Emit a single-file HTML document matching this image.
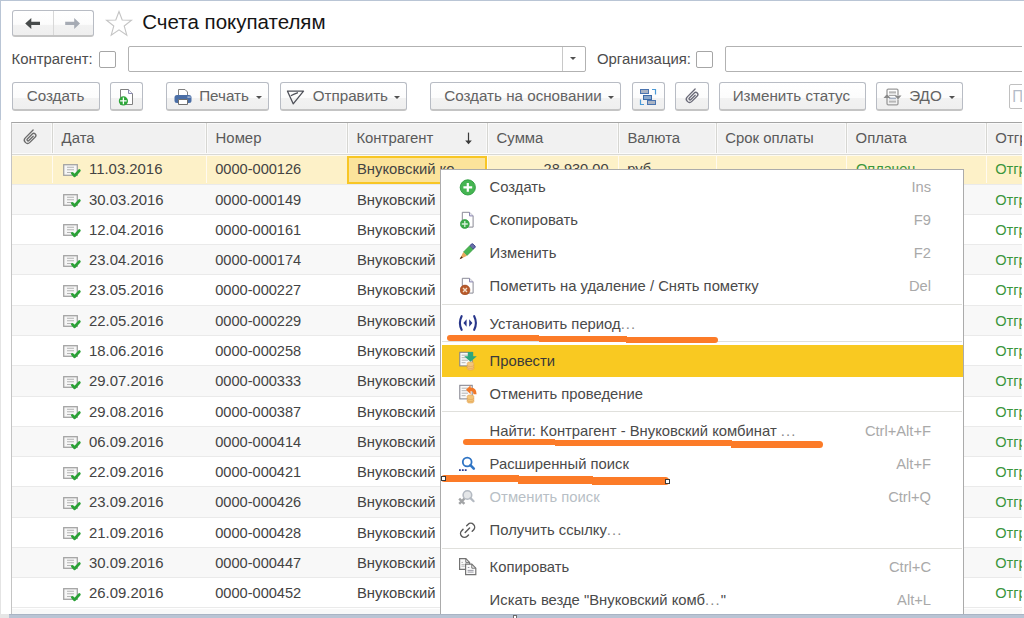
<!DOCTYPE html>
<html><head><meta charset="utf-8">
<style>
*{box-sizing:border-box}
html,body{margin:0;padding:0}
body{width:1024px;height:618px;overflow:hidden;position:relative;background:#fff;font-family:"Liberation Sans",sans-serif;color:#404040}
.a{position:absolute}
.t{position:absolute;white-space:nowrap;line-height:20px;height:20px}
.btn{position:absolute;top:82px;height:29px;border:1px solid #b8bcc4;border-bottom:2px solid #c4c4c4;border-radius:3px;background:linear-gradient(#ffffff 0%,#fcfcfc 56%,#f2f2f2 58%,#efefef 100%)}
.bt{position:absolute;top:5.4px;margin-left:-0.8px;font-size:15.2px;line-height:16px;color:#636363;white-space:nowrap;}
.dd{position:absolute;width:0;height:0;border-left:3.5px solid transparent;border-right:3.5px solid transparent;border-top:3.5px solid #505050}
.hd{position:absolute;top:122.5px;height:31px;font-size:14.9px;line-height:31px;color:#5a5a5a;padding-left:9px;white-space:nowrap;}
.hdv{position:absolute;top:123px;width:1px;height:31px;background:#d6d6d2;box-shadow:-1px 0 0 #fafafa,1px 0 0 #fafafa}
.row{position:absolute;left:12px;width:1010px;height:30.28px;border-bottom:1px solid #eaeaea}
.cell{position:absolute;font-size:14.6px;line-height:30px;height:30px;white-space:nowrap;color:#434343;top:0;}
.g{color:#3a963c}
.mi{position:absolute;left:441px;width:522px;height:33px}
.mt{position:absolute;left:48.6px;top:0.8px;line-height:33px;font-size:14.8px;color:#4a4a4a;white-space:nowrap;}
.ms{position:absolute;right:32px;top:0.8px;line-height:33px;font-size:14.7px;color:#a9a9a9;white-space:nowrap;}
.sep{position:absolute;left:442px;width:520px;height:1px;background:#e0e0dc}
.orl{position:absolute;background:#fc7b28}
</style></head><body>
<!-- frame -->
<div class="a" style="left:0;top:0;width:1024px;height:1px;background:#b9c5d5"></div>
<div class="a" style="left:0;top:0;width:1px;height:120px;background:#b9c5d5"></div>
<div class="a" style="left:0;top:120px;width:1px;height:498px;background:#e4e4e4"></div>

<!-- nav buttons -->
<div class="btn" style="left:11.5px;top:10px;width:82px;height:27px"></div>
<div class="a" style="left:52.5px;top:11px;width:1px;height:24px;background:#d8d8d8"></div>
<svg class="a" style="left:24px;top:17px" width="18" height="13" viewBox="0 0 18 13"><path d="M1.2 6.5 L7.3 1.1 L7.3 4.7 L16 4.7 L16 7.9 L7.3 7.9 L7.3 12.1 Z" fill="#464a4a"/></svg>
<svg class="a" style="left:64px;top:17px" width="18" height="13" viewBox="0 0 18 13"><path d="M16 6.5 L10.2 1.1 L10.2 4.7 L1.2 4.7 L1.2 7.9 L10.2 7.9 L10.2 12.1 Z" fill="#a6abb4"/></svg>
<!-- star -->
<svg class="a" style="left:105px;top:10px" width="28" height="27" viewBox="0 0 28 27"><path d="M14 1.5 L17.2 10 L26.5 10.3 L19.2 16 L21.8 25.2 L14 19.8 L6.2 25.2 L8.8 16 L1.5 10.3 L10.8 10 Z" fill="none" stroke="#c4c4c4" stroke-width="1.1"/></svg>
<div class="t" style="left:142.3px;top:10.3px;font-size:20.5px;line-height:24px;height:24px;color:#151515">Счета покупателям</div>

<!-- filter row -->
<div class="t" style="left:11.5px;top:48.5px;font-size:14.9px;color:#4d4d4d;">Контрагент:</div>
<div class="a" style="left:99px;top:51px;width:17px;height:17px;border:1px solid #a6a6a6;border-radius:2px;background:#fff"></div>
<div class="a" style="left:128px;top:46px;width:458px;height:26px;border:1px solid #b2b2b2;border-radius:2px;background:#fff"></div>
<div class="a" style="left:561.5px;top:47px;width:1px;height:24px;background:#c8c8c8"></div>
<div class="dd" style="left:569.5px;top:57px"></div>
<div class="t" style="left:597px;top:48.5px;font-size:14.9px;color:#4d4d4d;">Организация:</div>
<div class="a" style="left:696px;top:51px;width:17px;height:17px;border:1px solid #a6a6a6;border-radius:2px;background:#fff"></div>
<div class="a" style="left:725px;top:46px;width:310px;height:26px;border:1px solid #b2b2b2;border-radius:2px;background:#fff"></div>

<!-- toolbar -->
<div class="btn" style="left:11.5px;width:88px"><div class="bt" style="left:15px">Создать</div></div>
<div class="btn" style="left:110px;width:33px"></div>
<div class="btn" style="left:166px;width:103px"><div class="bt" style="left:33px">Печать</div><div class="dd" style="left:89px;top:13px"></div></div>
<div class="btn" style="left:279.5px;width:127px"><div class="bt" style="left:33px">Отправить</div><div class="dd" style="left:113px;top:13px"></div></div>
<div class="btn" style="left:430px;width:191px"><div class="bt" style="left:14px">Создать на основании</div><div class="dd" style="left:177px;top:13px"></div></div>
<div class="btn" style="left:631.5px;width:33.5px"></div>
<div class="btn" style="left:675px;width:34px"></div>
<div class="btn" style="left:718.5px;width:147.5px"><div class="bt" style="left:14px">Изменить статус</div></div>
<div class="btn" style="left:876px;width:86.5px"><div class="bt" style="left:33px">ЭДО</div><div class="dd" style="left:72px;top:13px"></div></div>
<div class="a" style="left:1009px;top:84px;width:30px;height:25px;border:1px solid #c0c0c0;border-radius:2px;background:#fff"></div>
<div class="t" style="left:1012.3px;top:86.5px;font-size:15px;color:#b4bcc8;transform:scaleY(1.15);transform-origin:0 15px">П</div>


<!-- toolbar icons -->
<svg class="a" style="left:118px;top:88px" width="18" height="18" viewBox="0 0 18 18"><path d="M2.5 1.5h8l4 4v11h-12z" fill="#fff" stroke="#808080"/><path d="M10.5 1.5v4h4" fill="#eef" stroke="#8a8ab0"/><circle cx="5.4" cy="12.9" r="4.6" fill="#2ea63a"/><path d="M5.4 9.6v6.6M2.1 12.9h6.6" stroke="#fff" stroke-width="1.3"/></svg>
<svg class="a" style="left:174px;top:88px" width="18" height="18" viewBox="0 0 18 18"><path d="M4.5 1.5h6.5l2.5 2.5v4h-9z" fill="#fff" stroke="#808080"/><rect x="0.5" y="7" width="17" height="8" rx="2.5" fill="#4a6ea6"/><rect x="13.5" y="8.5" width="1.3" height="1.2" fill="#dfe8f5"/><rect x="15.3" y="8.5" width="1.2" height="1.2" fill="#dfe8f5"/><path d="M4.5 11.5h9v5h-9z" fill="#fff" stroke="#707070"/></svg>
<svg class="a" style="left:286px;top:90px" width="19" height="15" viewBox="0 0 19 15"><path d="M1.5 1.2 L17.5 1.2 L7.2 13.8 Z" fill="none" stroke="#4e5058" stroke-width="1.3" stroke-linejoin="round"/><path d="M4.8 5.7 Q8 4 12 2.6" fill="none" stroke="#4e5058" stroke-width="1.2"/></svg>
<svg class="a" style="left:639px;top:88px" width="18" height="18" viewBox="0 0 18 18"><path d="M13 1.5h3.5v5M1.5 11.5v5h3.5" fill="none" stroke="#4a9ad8" stroke-width="1.2"/><rect x="1.5" y="1.5" width="8" height="4" fill="#aab4c4" stroke="#4a74b0"/><rect x="4.5" y="7.5" width="8" height="4" fill="#8aa8cc" stroke="#3a6aa8"/><rect x="8.5" y="12.5" width="8" height="4" fill="#aab4c4" stroke="#4a74b0"/></svg>
<svg class="a" style="left:682.5px;top:87.5px" width="18" height="18" viewBox="0 0 18 18"><g transform="rotate(45 9 9)"><path d="M5.6 1.2 V12.2 A3.2 3.2 0 0 0 12 12.2 V4.6 A2.1 2.1 0 0 0 7.8 4.6 V11.6 A1.1 1.1 0 0 0 10 11.6 V5.5" fill="none" stroke="#6a6a78" stroke-width="1.35" stroke-linecap="round"/></g></svg>
<svg class="a" style="left:883px;top:88px" width="20" height="18" viewBox="0 0 20 18"><path d="M4 6.5 V2.5 a1.3 1.3 0 0 1 1.3 -1.3 h8.4 a1.3 1.3 0 0 1 1.3 1.3 V7" fill="none" stroke="#9a9a9a" stroke-width="1.3"/><path d="M4 10 V15.5 a1.3 1.3 0 0 0 1.3 1.3 h8.4 a1.3 1.3 0 0 0 1.3 -1.3 V11.5" fill="none" stroke="#9a9a9a" stroke-width="1.3"/><rect x="6" y="3.3" width="7" height="2.2" fill="#b8b8b8"/><rect x="6" y="6.8" width="7" height="1.2" fill="#a8a8a8"/><rect x="6" y="9.6" width="7" height="1.6" fill="#a6b0c0"/><rect x="6" y="12.6" width="7" height="2" fill="#b8b8b8"/><path d="M0.5 10 L4 6 L7.5 10Z" fill="#8a8a8a"/><path d="M11.5 7.5 L15 11.5 L18.5 7.5Z" fill="#8a8a8a"/></svg>

<!-- table -->
<div class="a" style="left:11px;top:122px;width:1011px;height:492px;border-left:1.5px solid #c4c4c4;border-top:1px solid #a4a4a4;background:#fff"></div>
<div class="a" style="left:12px;top:123px;width:1010px;height:31px;background:#f1f1f1;border-top:1px solid #fafafa"></div>

<div class="hdv" style="left:52.1px"></div>
<div class="hdv" style="left:206.1px"></div>
<div class="hdv" style="left:346.9px"></div>
<div class="hdv" style="left:487.1px"></div>
<div class="hdv" style="left:617.9px"></div>
<div class="hdv" style="left:715.7px"></div>
<div class="hdv" style="left:846.1px"></div>
<div class="hdv" style="left:985.8px"></div>
<div class="hd" style="left:52.6px">Дата</div>
<div class="hd" style="left:206.6px">Номер</div>
<div class="hd" style="left:347.4px">Контрагент</div>
<div class="hd" style="left:487.6px">Сумма</div>
<div class="hd" style="left:618.4px">Валюта</div>
<div class="hd" style="left:716.2px">Срок оплаты</div>
<div class="hd" style="left:846.6px">Оплата</div>
<div class="hd" style="left:986.3px">Отгрузка</div>
<svg class="a" style="left:21px;top:129px" width="18" height="18" viewBox="0 0 18 18"><g transform="rotate(45 9 9)"><path d="M5.6 1.2 V12.2 A3.2 3.2 0 0 0 12 12.2 V4.6 A2.1 2.1 0 0 0 7.8 4.6 V11.6 A1.1 1.1 0 0 0 10 11.6 V5.5" fill="none" stroke="#6b6b6b" stroke-width="1.35" stroke-linecap="round"/></g></svg>
<svg class="a" style="left:464px;top:132px" width="9" height="14" viewBox="0 0 9 14"><path d="M4.5 0.6V9.5" stroke="#3a3a3a" stroke-width="1.2"/><path d="M1.2 8.6 L7.8 8.6 L4.5 12.2 Z" fill="#3a3a3a"/></svg>
<div class="row" style="top:154.30px;background:#fdf1c8"><div class="a" style="left:40.1px;top:0;width:1px;height:29px;background:#fffaf0"></div><div class="a" style="left:194.1px;top:0;width:1px;height:29px;background:#fffaf0"></div><div class="a" style="left:334.9px;top:0;width:1px;height:29px;background:#fffaf0"></div><div class="a" style="left:475.1px;top:0;width:1px;height:29px;background:#fffaf0"></div><div class="a" style="left:605.9px;top:0;width:1px;height:29px;background:#fffaf0"></div><div class="a" style="left:703.7px;top:0;width:1px;height:29px;background:#fffaf0"></div><div class="a" style="left:834.1px;top:0;width:1px;height:29px;background:#fffaf0"></div><div class="a" style="left:973.8px;top:0;width:1px;height:29px;background:#fffaf0"></div><div class="a" style="left:335.4px;top:1.5px;width:140px;height:28px;border:2px solid #f8c624;background:#fbe39b"></div><svg class="a" style="left:51px;top:9.5px" width="19" height="15" viewBox="0 0 19 15"><rect x="0.7" y="0.7" width="13.6" height="10.6" fill="#f6f6f6" stroke="#a4a4a4" stroke-width="1.3"/><path d="M4 3.2h7M4 5.7h7M4 8.5h5" stroke="#b4b4b4" stroke-width="1.1"/><path d="M9.4 9.4 L11.6 11.8 L16.3 6.6" fill="none" stroke="#2aa136" stroke-width="2.8" stroke-linecap="round" stroke-linejoin="round"/></svg><div class="cell" style="left:77px;font-size:14.9px">11.03.2016</div><div class="cell" style="left:203.2px">0000-000126</div><div class="cell" style="left:345px;font-size:14.8px">Внуковский ко</div><div class="cell" style="left:531.6px">28 930,00</div><div class="cell" style="left:615.3px">руб.</div><div class="cell g" style="left:844px">Оплачен</div><div class="cell g" style="left:983.2px">Отгружен</div></div>
<div class="row" style="top:184.58px;background:#f8f8f8"><svg class="a" style="left:51px;top:9.5px" width="19" height="15" viewBox="0 0 19 15"><rect x="0.7" y="0.7" width="13.6" height="10.6" fill="#f6f6f6" stroke="#a4a4a4" stroke-width="1.3"/><path d="M4 3.2h7M4 5.7h7M4 8.5h5" stroke="#b4b4b4" stroke-width="1.1"/><path d="M9.4 9.4 L11.6 11.8 L16.3 6.6" fill="none" stroke="#2aa136" stroke-width="2.8" stroke-linecap="round" stroke-linejoin="round"/></svg><div class="cell" style="left:77px;font-size:14.9px">30.03.2016</div><div class="cell" style="left:203.2px">0000-000149</div><div class="cell" style="left:345px;font-size:14.8px">Внуковский</div><div class="cell" style="left:531.6px">28 930,00</div><div class="cell" style="left:615.3px">руб.</div><div class="cell g" style="left:844px">Оплачен</div><div class="cell g" style="left:983.2px">Отгружен</div></div>
<div class="row" style="top:214.86px;background:#ffffff"><svg class="a" style="left:51px;top:9.5px" width="19" height="15" viewBox="0 0 19 15"><rect x="0.7" y="0.7" width="13.6" height="10.6" fill="#f6f6f6" stroke="#a4a4a4" stroke-width="1.3"/><path d="M4 3.2h7M4 5.7h7M4 8.5h5" stroke="#b4b4b4" stroke-width="1.1"/><path d="M9.4 9.4 L11.6 11.8 L16.3 6.6" fill="none" stroke="#2aa136" stroke-width="2.8" stroke-linecap="round" stroke-linejoin="round"/></svg><div class="cell" style="left:77px;font-size:14.9px">12.04.2016</div><div class="cell" style="left:203.2px">0000-000161</div><div class="cell" style="left:345px;font-size:14.8px">Внуковский</div><div class="cell" style="left:531.6px">28 930,00</div><div class="cell" style="left:615.3px">руб.</div><div class="cell g" style="left:844px">Оплачен</div><div class="cell g" style="left:983.2px">Отгружен</div></div>
<div class="row" style="top:245.14px;background:#f8f8f8"><svg class="a" style="left:51px;top:9.5px" width="19" height="15" viewBox="0 0 19 15"><rect x="0.7" y="0.7" width="13.6" height="10.6" fill="#f6f6f6" stroke="#a4a4a4" stroke-width="1.3"/><path d="M4 3.2h7M4 5.7h7M4 8.5h5" stroke="#b4b4b4" stroke-width="1.1"/><path d="M9.4 9.4 L11.6 11.8 L16.3 6.6" fill="none" stroke="#2aa136" stroke-width="2.8" stroke-linecap="round" stroke-linejoin="round"/></svg><div class="cell" style="left:77px;font-size:14.9px">23.04.2016</div><div class="cell" style="left:203.2px">0000-000174</div><div class="cell" style="left:345px;font-size:14.8px">Внуковский</div><div class="cell" style="left:531.6px">28 930,00</div><div class="cell" style="left:615.3px">руб.</div><div class="cell g" style="left:844px">Оплачен</div><div class="cell g" style="left:983.2px">Отгружен</div></div>
<div class="row" style="top:275.42px;background:#ffffff"><svg class="a" style="left:51px;top:9.5px" width="19" height="15" viewBox="0 0 19 15"><rect x="0.7" y="0.7" width="13.6" height="10.6" fill="#f6f6f6" stroke="#a4a4a4" stroke-width="1.3"/><path d="M4 3.2h7M4 5.7h7M4 8.5h5" stroke="#b4b4b4" stroke-width="1.1"/><path d="M9.4 9.4 L11.6 11.8 L16.3 6.6" fill="none" stroke="#2aa136" stroke-width="2.8" stroke-linecap="round" stroke-linejoin="round"/></svg><div class="cell" style="left:77px;font-size:14.9px">23.05.2016</div><div class="cell" style="left:203.2px">0000-000227</div><div class="cell" style="left:345px;font-size:14.8px">Внуковский</div><div class="cell" style="left:531.6px">28 930,00</div><div class="cell" style="left:615.3px">руб.</div><div class="cell g" style="left:844px">Оплачен</div><div class="cell g" style="left:983.2px">Отгружен</div></div>
<div class="row" style="top:305.70px;background:#f8f8f8"><svg class="a" style="left:51px;top:9.5px" width="19" height="15" viewBox="0 0 19 15"><rect x="0.7" y="0.7" width="13.6" height="10.6" fill="#f6f6f6" stroke="#a4a4a4" stroke-width="1.3"/><path d="M4 3.2h7M4 5.7h7M4 8.5h5" stroke="#b4b4b4" stroke-width="1.1"/><path d="M9.4 9.4 L11.6 11.8 L16.3 6.6" fill="none" stroke="#2aa136" stroke-width="2.8" stroke-linecap="round" stroke-linejoin="round"/></svg><div class="cell" style="left:77px;font-size:14.9px">22.05.2016</div><div class="cell" style="left:203.2px">0000-000229</div><div class="cell" style="left:345px;font-size:14.8px">Внуковский</div><div class="cell" style="left:531.6px">28 930,00</div><div class="cell" style="left:615.3px">руб.</div><div class="cell g" style="left:844px">Оплачен</div><div class="cell g" style="left:983.2px">Отгружен</div></div>
<div class="row" style="top:335.98px;background:#ffffff"><svg class="a" style="left:51px;top:9.5px" width="19" height="15" viewBox="0 0 19 15"><rect x="0.7" y="0.7" width="13.6" height="10.6" fill="#f6f6f6" stroke="#a4a4a4" stroke-width="1.3"/><path d="M4 3.2h7M4 5.7h7M4 8.5h5" stroke="#b4b4b4" stroke-width="1.1"/><path d="M9.4 9.4 L11.6 11.8 L16.3 6.6" fill="none" stroke="#2aa136" stroke-width="2.8" stroke-linecap="round" stroke-linejoin="round"/></svg><div class="cell" style="left:77px;font-size:14.9px">18.06.2016</div><div class="cell" style="left:203.2px">0000-000258</div><div class="cell" style="left:345px;font-size:14.8px">Внуковский</div><div class="cell" style="left:531.6px">28 930,00</div><div class="cell" style="left:615.3px">руб.</div><div class="cell g" style="left:844px">Оплачен</div><div class="cell g" style="left:983.2px">Отгружен</div></div>
<div class="row" style="top:366.26px;background:#f8f8f8"><svg class="a" style="left:51px;top:9.5px" width="19" height="15" viewBox="0 0 19 15"><rect x="0.7" y="0.7" width="13.6" height="10.6" fill="#f6f6f6" stroke="#a4a4a4" stroke-width="1.3"/><path d="M4 3.2h7M4 5.7h7M4 8.5h5" stroke="#b4b4b4" stroke-width="1.1"/><path d="M9.4 9.4 L11.6 11.8 L16.3 6.6" fill="none" stroke="#2aa136" stroke-width="2.8" stroke-linecap="round" stroke-linejoin="round"/></svg><div class="cell" style="left:77px;font-size:14.9px">29.07.2016</div><div class="cell" style="left:203.2px">0000-000333</div><div class="cell" style="left:345px;font-size:14.8px">Внуковский</div><div class="cell" style="left:531.6px">28 930,00</div><div class="cell" style="left:615.3px">руб.</div><div class="cell g" style="left:844px">Оплачен</div><div class="cell g" style="left:983.2px">Отгружен</div></div>
<div class="row" style="top:396.54px;background:#ffffff"><svg class="a" style="left:51px;top:9.5px" width="19" height="15" viewBox="0 0 19 15"><rect x="0.7" y="0.7" width="13.6" height="10.6" fill="#f6f6f6" stroke="#a4a4a4" stroke-width="1.3"/><path d="M4 3.2h7M4 5.7h7M4 8.5h5" stroke="#b4b4b4" stroke-width="1.1"/><path d="M9.4 9.4 L11.6 11.8 L16.3 6.6" fill="none" stroke="#2aa136" stroke-width="2.8" stroke-linecap="round" stroke-linejoin="round"/></svg><div class="cell" style="left:77px;font-size:14.9px">29.08.2016</div><div class="cell" style="left:203.2px">0000-000387</div><div class="cell" style="left:345px;font-size:14.8px">Внуковский</div><div class="cell" style="left:531.6px">28 930,00</div><div class="cell" style="left:615.3px">руб.</div><div class="cell g" style="left:844px">Оплачен</div><div class="cell g" style="left:983.2px">Отгружен</div></div>
<div class="row" style="top:426.82px;background:#f8f8f8"><svg class="a" style="left:51px;top:9.5px" width="19" height="15" viewBox="0 0 19 15"><rect x="0.7" y="0.7" width="13.6" height="10.6" fill="#f6f6f6" stroke="#a4a4a4" stroke-width="1.3"/><path d="M4 3.2h7M4 5.7h7M4 8.5h5" stroke="#b4b4b4" stroke-width="1.1"/><path d="M9.4 9.4 L11.6 11.8 L16.3 6.6" fill="none" stroke="#2aa136" stroke-width="2.8" stroke-linecap="round" stroke-linejoin="round"/></svg><div class="cell" style="left:77px;font-size:14.9px">06.09.2016</div><div class="cell" style="left:203.2px">0000-000414</div><div class="cell" style="left:345px;font-size:14.8px">Внуковский</div><div class="cell" style="left:531.6px">28 930,00</div><div class="cell" style="left:615.3px">руб.</div><div class="cell g" style="left:844px">Оплачен</div><div class="cell g" style="left:983.2px">Отгружен</div></div>
<div class="row" style="top:457.10px;background:#ffffff"><svg class="a" style="left:51px;top:9.5px" width="19" height="15" viewBox="0 0 19 15"><rect x="0.7" y="0.7" width="13.6" height="10.6" fill="#f6f6f6" stroke="#a4a4a4" stroke-width="1.3"/><path d="M4 3.2h7M4 5.7h7M4 8.5h5" stroke="#b4b4b4" stroke-width="1.1"/><path d="M9.4 9.4 L11.6 11.8 L16.3 6.6" fill="none" stroke="#2aa136" stroke-width="2.8" stroke-linecap="round" stroke-linejoin="round"/></svg><div class="cell" style="left:77px;font-size:14.9px">22.09.2016</div><div class="cell" style="left:203.2px">0000-000421</div><div class="cell" style="left:345px;font-size:14.8px">Внуковский</div><div class="cell" style="left:531.6px">28 930,00</div><div class="cell" style="left:615.3px">руб.</div><div class="cell g" style="left:844px">Оплачен</div><div class="cell g" style="left:983.2px">Отгружен</div></div>
<div class="row" style="top:487.38px;background:#f8f8f8"><svg class="a" style="left:51px;top:9.5px" width="19" height="15" viewBox="0 0 19 15"><rect x="0.7" y="0.7" width="13.6" height="10.6" fill="#f6f6f6" stroke="#a4a4a4" stroke-width="1.3"/><path d="M4 3.2h7M4 5.7h7M4 8.5h5" stroke="#b4b4b4" stroke-width="1.1"/><path d="M9.4 9.4 L11.6 11.8 L16.3 6.6" fill="none" stroke="#2aa136" stroke-width="2.8" stroke-linecap="round" stroke-linejoin="round"/></svg><div class="cell" style="left:77px;font-size:14.9px">23.09.2016</div><div class="cell" style="left:203.2px">0000-000426</div><div class="cell" style="left:345px;font-size:14.8px">Внуковский</div><div class="cell" style="left:531.6px">28 930,00</div><div class="cell" style="left:615.3px">руб.</div><div class="cell g" style="left:844px">Оплачен</div><div class="cell g" style="left:983.2px">Отгружен</div></div>
<div class="row" style="top:517.66px;background:#ffffff"><svg class="a" style="left:51px;top:9.5px" width="19" height="15" viewBox="0 0 19 15"><rect x="0.7" y="0.7" width="13.6" height="10.6" fill="#f6f6f6" stroke="#a4a4a4" stroke-width="1.3"/><path d="M4 3.2h7M4 5.7h7M4 8.5h5" stroke="#b4b4b4" stroke-width="1.1"/><path d="M9.4 9.4 L11.6 11.8 L16.3 6.6" fill="none" stroke="#2aa136" stroke-width="2.8" stroke-linecap="round" stroke-linejoin="round"/></svg><div class="cell" style="left:77px;font-size:14.9px">21.09.2016</div><div class="cell" style="left:203.2px">0000-000428</div><div class="cell" style="left:345px;font-size:14.8px">Внуковский</div><div class="cell" style="left:531.6px">28 930,00</div><div class="cell" style="left:615.3px">руб.</div><div class="cell g" style="left:844px">Оплачен</div><div class="cell g" style="left:983.2px">Отгружен</div></div>
<div class="row" style="top:547.94px;background:#f8f8f8"><svg class="a" style="left:51px;top:9.5px" width="19" height="15" viewBox="0 0 19 15"><rect x="0.7" y="0.7" width="13.6" height="10.6" fill="#f6f6f6" stroke="#a4a4a4" stroke-width="1.3"/><path d="M4 3.2h7M4 5.7h7M4 8.5h5" stroke="#b4b4b4" stroke-width="1.1"/><path d="M9.4 9.4 L11.6 11.8 L16.3 6.6" fill="none" stroke="#2aa136" stroke-width="2.8" stroke-linecap="round" stroke-linejoin="round"/></svg><div class="cell" style="left:77px;font-size:14.9px">30.09.2016</div><div class="cell" style="left:203.2px">0000-000447</div><div class="cell" style="left:345px;font-size:14.8px">Внуковский</div><div class="cell" style="left:531.6px">28 930,00</div><div class="cell" style="left:615.3px">руб.</div><div class="cell g" style="left:844px">Оплачен</div><div class="cell g" style="left:983.2px">Отгружен</div></div>
<div class="row" style="top:578.22px;background:#ffffff"><svg class="a" style="left:51px;top:9.5px" width="19" height="15" viewBox="0 0 19 15"><rect x="0.7" y="0.7" width="13.6" height="10.6" fill="#f6f6f6" stroke="#a4a4a4" stroke-width="1.3"/><path d="M4 3.2h7M4 5.7h7M4 8.5h5" stroke="#b4b4b4" stroke-width="1.1"/><path d="M9.4 9.4 L11.6 11.8 L16.3 6.6" fill="none" stroke="#2aa136" stroke-width="2.8" stroke-linecap="round" stroke-linejoin="round"/></svg><div class="cell" style="left:77px;font-size:14.9px">26.09.2016</div><div class="cell" style="left:203.2px">0000-000452</div><div class="cell" style="left:345px;font-size:14.8px">Внуковский</div><div class="cell" style="left:531.6px">28 930,00</div><div class="cell" style="left:615.3px">руб.</div><div class="cell g" style="left:844px">Оплачен</div><div class="cell g" style="left:983.2px">Отгружен</div></div>
<div class="row" style="top:608.50px;background:#f8f8f8"></div>
<div class="a" style="left:12px;top:153px;width:1010px;height:1px;background:#fbfbfb"></div><div class="a" style="left:12px;top:154px;width:1010px;height:1px;background:#d9d9d5"></div><div class="a" style="left:12px;top:155px;width:1010px;height:1px;background:#fdfaf0"></div>

<!-- context menu -->
<div class="a" style="left:440px;top:169px;width:524px;height:460px;border:1px solid #ababab;background:#fff"></div>
<div class="sep" style="top:304px"></div>
<div class="sep" style="top:341px"></div>
<div class="sep" style="top:411px"></div>
<div class="sep" style="top:548px"></div>
<div class="a" style="left:442px;top:344.5px;width:520.5px;height:32px;background:#f9c921"></div>
<div class="mi" style="top:170.3px"><div class="mt" style="color:#4a4a4a">Создать</div><div class="ms">Ins</div></div>
<svg class="a" style="left:459px;top:178.5px" width="18" height="18" viewBox="0 0 18 18"><circle cx="8.8" cy="8.4" r="7.6" fill="#45b552" stroke="#2a9c3c" stroke-width="0.9"/><path d="M8.8 4v8.8M4.4 8.4h8.8" stroke="#fff" stroke-width="2.2"/></svg>
<div class="mi" style="top:203.3px"><div class="mt" style="color:#4a4a4a">Скопировать</div><div class="ms">F9</div></div>
<svg class="a" style="left:460px;top:211px" width="16" height="18" viewBox="0 0 16 18"><path d="M2.3 1.3h7.2l3.6 3.6v11.2h-10.8z" fill="#fff" stroke="#8a8a96" stroke-width="1"/><path d="M9.5 1.3v3.6h3.6" fill="#e8e8f4" stroke="#8a86b0" stroke-width="1"/><circle cx="4.8" cy="13" r="4.5" fill="#3aaa48" stroke="#2a9a3a" stroke-width="0.6"/><path d="M4.8 10v6M1.8 13h6" stroke="#d8f0da" stroke-width="1.3"/></svg>
<div class="mi" style="top:236.3px"><div class="mt" style="color:#4a4a4a">Изменить</div><div class="ms">F2</div></div>
<svg class="a" style="left:455.2px;top:240.4px" width="24" height="24" viewBox="0 0 24 24"><g transform="translate(12 12) rotate(45) translate(0 -10.4)"><rect x="-2.5" y="0.5" width="5" height="4" rx="1.3" fill="#6870a8" stroke="#353c86" stroke-width="0.9"/><rect x="-2.6" y="4.3" width="5.2" height="8.7" fill="#49b552" stroke="#3a8f42" stroke-width="0.4"/><path d="M-2.6 13 L2.6 13 L0 20.6Z" fill="#e9a85c"/><path d="M-1.1 17.4 L1.1 17.4 L0 20.8Z" fill="#4a2618"/></g></svg>
<div class="mi" style="top:269.3px"><div class="mt" style="color:#4a4a4a">Пометить на удаление / Снять пометку</div><div class="ms">Del</div></div>
<svg class="a" style="left:460px;top:277px" width="16" height="18" viewBox="0 0 16 18"><path d="M2.3 1.3h7.2l3.6 3.6v11.2h-10.8z" fill="#fff" stroke="#8a8a96" stroke-width="1"/><path d="M9.5 1.3v3.6h3.6" fill="#e8e8f4" stroke="#8a86b0" stroke-width="1"/><circle cx="5" cy="13" r="4.9" fill="#b85a2a" stroke="#9a4620" stroke-width="0.6"/><path d="M3 11l4 4M7 11l-4 4" stroke="#f2dcc8" stroke-width="1.4"/></svg>
<div class="mi" style="top:306.9px"><div class="mt" style="color:#4a4a4a">Установить период<span style="letter-spacing:1.1px;color:#8a8a8a">...</span></div></div>
<svg class="a" style="left:458px;top:315px" width="20" height="16" viewBox="0 0 20 16"><path d="M3.6 1.2 Q0.2 8 3.6 14.8M16.2 1.2 Q19.6 8 16.2 14.8" fill="none" stroke="#27358a" stroke-width="2.1" stroke-linecap="round"/><path d="M8.6 4.2 L5.4 8 L8.6 11.8Z M11.2 4.2 L14.4 8 L11.2 11.8Z" fill="#27358a"/></svg>
<div class="mi" style="top:344.0px"><div class="mt" style="color:#3a3a3a">Провести</div></div>
<svg class="a" style="left:459px;top:351px" width="20" height="21" viewBox="0 0 20 21"><rect x="0.8" y="1.3" width="12.4" height="13.6" fill="#fafafa" stroke="#7f7f8a" stroke-width="1"/><path d="M2.6 4.2h6.4M2.6 6.7h6.4M2.6 9.2h6.4M2.6 11.7h4" stroke="#b4b4b4" stroke-width="1"/><path d="M8.2 12.2 a3.3 1.3 0 0 1 6.6 0 v5.6 a3.3 1.3 0 0 1 -6.6 0z" fill="#f3c57a" stroke="#e0a050" stroke-width="0.6"/><path d="M8.2 14.2 a3.3 1.3 0 0 0 6.6 0 M8.2 16.2 a3.3 1.3 0 0 0 6.6 0" fill="none" stroke="#e0a050" stroke-width="0.6"/><path d="M8.8 1 h5.4 v4.2 h3.6 l-6.3 5.6 -6.3 -5.6 h3.6z" fill="#2da67c"/></svg>
<div class="mi" style="top:377.0px"><div class="mt" style="color:#4a4a4a">Отменить проведение</div></div>
<svg class="a" style="left:459px;top:384px" width="20" height="21" viewBox="0 0 20 21"><rect x="0.8" y="1.3" width="12.4" height="13.6" fill="#fafafa" stroke="#7f7f8a" stroke-width="1"/><path d="M2.6 4.2h6.4M2.6 6.7h6.4M2.6 9.2h6.4M2.6 11.7h4" stroke="#b4b4b4" stroke-width="1"/><path d="M8.2 12.2 a3.3 1.3 0 0 1 6.6 0 v5.6 a3.3 1.3 0 0 1 -6.6 0z" fill="#f3c57a" stroke="#e0a050" stroke-width="0.6"/><path d="M8.2 14.2 a3.3 1.3 0 0 0 6.6 0 M8.2 16.2 a3.3 1.3 0 0 0 6.6 0" fill="none" stroke="#e0a050" stroke-width="0.6"/><path d="M7 5.8 L11.6 1.2 L11.6 3.6 Q17.6 3.8 17.6 10.2 L14.4 10.2 Q14.4 7 11.6 7 L11.6 10.2 Z" fill="#f07828"/></svg>
<div class="mi" style="top:414.5px"><div class="mt" style="color:#4a4a4a">Найти: Контрагент - Внуковский комбинат <span style="letter-spacing:1.1px;color:#8a8a8a">...</span></div><div class="ms">Ctrl+Alt+F</div></div>
<div class="mi" style="top:447.1px"><div class="mt" style="color:#4a4a4a">Расширенный поиск</div><div class="ms">Alt+F</div></div>
<svg class="a" style="left:458px;top:456px" width="18" height="16" viewBox="0 0 18 16"><circle cx="9.2" cy="6" r="4.4" fill="none" stroke="#2f74c4" stroke-width="1.8"/><path d="M12.4 9.2 L15.8 12.6" stroke="#2f74c4" stroke-width="2.6" stroke-linecap="round"/><path d="M1 14.2h1.8M3.9 14.2h1.8M6.8 14.2h1.8" stroke="#25378e" stroke-width="1.7"/></svg>
<div class="mi" style="top:480.3px"><div class="mt" style="color:#b8bfc6">Отменить поиск</div><div class="ms">Ctrl+Q</div></div>
<svg class="a" style="left:457px;top:488px" width="19" height="19" viewBox="0 0 19 19"><circle cx="10.4" cy="7" r="4.3" fill="#e4e6e8" stroke="#b4bac2" stroke-width="1.6"/><path d="M13.5 10.1 L16.6 13.2" stroke="#b4bac2" stroke-width="2.2" stroke-linecap="round"/><path d="M2.2 10.6l5.2 5.2M7.4 10.6l-5.2 5.2" stroke="#a2a4a6" stroke-width="2.4"/></svg>
<div class="mi" style="top:513.7px"><div class="mt" style="color:#4a4a4a">Получить ссылку<span style="letter-spacing:1.1px;color:#8a8a8a">...</span></div></div>
<svg class="a" style="left:456px;top:519px" width="23" height="23" viewBox="0 0 23 23"><g transform="translate(11.6 11.3) rotate(-45)" fill="none" stroke="#5a5a5a" stroke-width="1.45" stroke-linecap="round"><path d="M2.6 -3.9 H4.45 A3.9 3.9 0 0 1 4.45 3.9 H2.6"/><path d="M-2.6 3.9 H-4.45 A3.9 3.9 0 0 1 -4.45 -3.9 H-2.6"/><path d="M-3.2 -0.2 H3"/></g></svg>
<div class="mi" style="top:550.7px"><div class="mt" style="color:#4a4a4a">Копировать</div><div class="ms">Ctrl+C</div></div>
<svg class="a" style="left:458px;top:557px" width="20" height="20" viewBox="0 0 20 20"><path d="M1.6 1.6 H7.8 L11.6 5.4 V12.4 H1.6 Z" fill="#fafafa" stroke="#737373" stroke-width="1.2"/><path d="M7.8 1.6 V5.4 H11.6" fill="none" stroke="#737373" stroke-width="1"/><path d="M3.4 5.4h1.6M3.4 7.6h3.4M3.4 9.2h3.4" stroke="#b8b8b8" stroke-width="1"/><path d="M7.6 7.2 H13.8 L17.8 11.2 V17.6 H7.6 Z" fill="#fafafa" stroke="#737373" stroke-width="1.2"/><path d="M13.8 7.2 V11.2 H17.8" fill="none" stroke="#737373" stroke-width="1"/><path d="M9.8 10.5h1.6M9.6 13.4H15.6M9.6 15.1H15.6" stroke="#9a9aa4" stroke-width="1"/></svg>
<div class="mi" style="top:583.5px"><div class="mt" style="color:#4a4a4a">Искать везде "Внуковский комб<span style="letter-spacing:1.1px;color:#8a8a8a">...</span>"</div><div class="ms">Alt+L</div></div>
<div class="orl" style="left:446.8px;top:334.7px;width:92.7px;height:6.8px;border-radius:3.5px 0 0 3.5px"></div>
<div class="orl" style="left:539px;top:335.7px;width:87.5px;height:6.6px;border-radius:0 0 0 0"></div>
<div class="orl" style="left:626px;top:336.5px;width:92.0px;height:6.7px;border-radius:0 3.5px 3.5px 0"></div>
<div class="orl" style="left:463.3px;top:438.5px;width:92.2px;height:6.5px;border-radius:3.5px 0 0 3.5px"></div>
<div class="orl" style="left:555px;top:439.5px;width:176.5px;height:6.4px;border-radius:0 0 0 0"></div>
<div class="orl" style="left:731px;top:440.8px;width:91.8px;height:6.8px;border-radius:0 3.5px 3.5px 0"></div>
<div class="orl" style="left:441px;top:475.3px;width:77.5px;height:7.0px;border-radius:3.5px 0 0 3.5px"></div>
<div class="orl" style="left:518px;top:476.3px;width:74.5px;height:7.3px;border-radius:0 0 0 0"></div>
<div class="orl" style="left:592px;top:477.2px;width:77.3px;height:7.4px;border-radius:0 3.5px 3.5px 0"></div>
<div class="a" style="left:441px;top:476.3px;width:5px;height:5px;border:1px solid #3a3a3a;background:#fff"></div>
<div class="a" style="left:664.6px;top:479.2px;width:5px;height:5px;border:1px solid #3a3a3a;background:#fff"></div>

<div class="a" style="left:1022.3px;top:40px;width:2px;height:574px;background:#fff"></div>
<!-- bottom bar -->
<div class="a" style="left:0;top:614px;width:1024px;height:4px;background:#e6e6e6"></div>
<div class="a" style="left:9px;top:614px;width:1015px;height:4px;background:#b9c4d4;border-top:1px solid #a9b4c4"></div>
<div class="a" style="left:512.5px;top:615px;width:4px;height:4px;border:1px solid #6a6a6a;border-bottom:none;background:#fff"></div>
</body></html>
